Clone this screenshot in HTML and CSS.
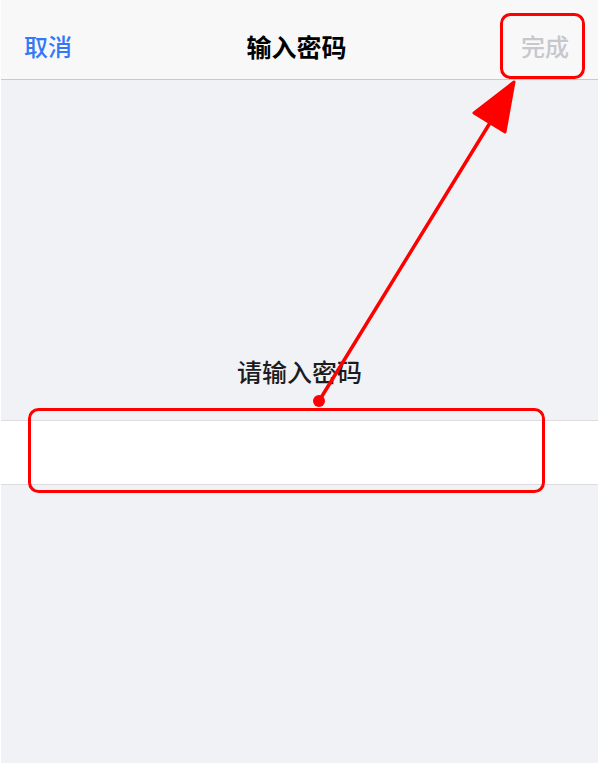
FILE: index.html
```html
<!DOCTYPE html>
<html lang="zh-CN">
<head>
<meta charset="utf-8">
<title>输入密码</title>
<link rel="stylesheet" href="styles.css">
</head>
<body>
<div class="screen">
  <header class="nav">
    <span class="nav-btn nav-cancel">取消</span>
    <span class="nav-title">输入密码</span>
    <span class="nav-btn nav-done">完成</span>
  </header>
  <main class="content">
    <p class="prompt">请输入密码</p>
    <div class="field"></div>
  </main>
  <svg class="marks" width="600" height="765" viewBox="0 0 600 765" aria-hidden="true">
    <rect x="501.5" y="14.5" width="82" height="63" rx="9" fill="none" stroke="#ff0000" stroke-width="3"/>
    <rect x="29.5" y="409.5" width="514" height="82" rx="9" fill="none" stroke="#ff0000" stroke-width="3"/>
    <line x1="319" y1="401" x2="493" y2="118" stroke="#ff0000" stroke-width="3.5" stroke-linecap="round"/>
    <polygon points="514,82 474,113 505,132" fill="#ff0000" stroke="#ff0000" stroke-width="3" stroke-linejoin="round"/>
    <circle cx="319" cy="401" r="6" fill="#ff0000"/>
  </svg>
</div>
</body>
</html>
```
FILE: styles.css
```css
* {
  box-sizing: border-box;
}

html, body {
  margin: 0;
  padding: 0;
  background: #ffffff;
}

body {
  font-family: "Noto Sans CJK SC", "Noto Sans", sans-serif;
}

.screen {
  position: relative;
  width: 600px;
  height: 765px;
  padding: 0 2px 2px 1px;
  display: flex;
  flex-direction: column;
}

.nav {
  height: 80px;
  flex: none;
  display: grid;
  grid-template-columns: 1fr auto 1fr;
  align-items: center;
  padding: 12px 29px 0 23px;
  background: #f8f8f8;
  border-bottom: 1px solid #c9c9ce;
  font-size: 24px;
  line-height: 30px;
}

.nav-btn {
  font-weight: 500;
}

.nav-cancel {
  justify-self: start;
  color: #3478f6;
}

.nav-title {
  font-size: 25px;
  font-weight: 700;
  color: #000000;
}

.nav-done {
  justify-self: end;
  color: #c7c7cc;
}

.content {
  flex: 1;
  background: #f1f2f6;
  display: flex;
  flex-direction: column;
}

.prompt {
  margin: 276px 0 0;
  text-align: center;
  font-size: 25px;
  font-weight: 500;
  line-height: 30px;
  color: #1c1c1e;
}

.field {
  margin-top: 34px;
  height: 65px;
  background: #ffffff;
  border-top: 1px solid #dcdce0;
  border-bottom: 1px solid #dcdce0;
}

.marks {
  position: absolute;
  top: 0;
  left: 0;
  pointer-events: none;
}
```
